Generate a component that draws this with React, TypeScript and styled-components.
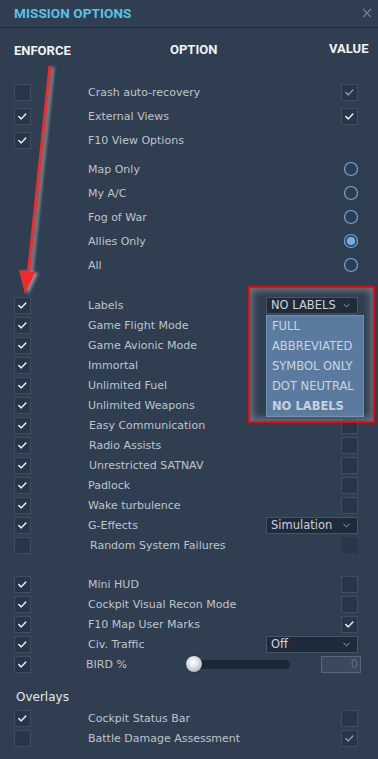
import styled, { createGlobalStyle } from 'styled-components';

const GlobalStyle = createGlobalStyle`
  html, body {
    margin: 0;
    padding: 0;
    background: #2f3e50;
  }
  * {
    box-sizing: border-box;
  }
`;

const Panel = styled.div`
  position: relative;
  width: 378px;
  height: 759px;
  background: #2f3e50;
  font-family: "DejaVu Sans", "Liberation Sans", sans-serif;
  font-size: 11px;
  color: #bfc5cc;
  overflow: hidden;
`;

const TitleBar = styled.div`
  height: 28px;
  display: flex;
  align-items: center;
  justify-content: space-between;
  padding: 0 6px 1px 14px;
  border-bottom: 1px solid #1f2a37;
`;

const Title = styled.div`
  font-family: Roboto, "Liberation Sans", sans-serif;
  font-weight: 700;
  font-size: 13.5px;
  color: #57c2ea;
  letter-spacing: 0.1px;
`;

const Header = styled.div`
  height: 42px;
  display: grid;
  grid-template-columns: 156px 159px auto;
  align-items: center;
  padding-left: 14px;
  font-family: Roboto, "Liberation Sans", sans-serif;
  font-weight: 700;
  font-size: 13px;
  color: #f2f4f6;
`;

const HeadCell = styled.div<{ $dy?: number }>`
  transform: translateY(${p => p.$dy ?? 0}px);
`;

const Section = styled.div<{ $top: number }>`
  margin-top: ${p => p.$top}px;
  display: flex;
  flex-direction: column;
`;

const Row = styled.div<{ $h: number }>`
  height: ${p => p.$h}px;
  display: grid;
  grid-template-columns: 74px 1fr auto;
  align-items: center;
  padding: 0 20px 0 14px;
`;

const OptionText = styled.div<{ $shift?: number }>`
  margin-left: ${p => p.$shift ?? 0}px;
  white-space: nowrap;
`;

const Value = styled.div`
  display: flex;
  align-items: center;
  justify-content: flex-end;
  gap: 31px;
`;

const Box = styled.div<{ $faint?: boolean }>`
  width: 17px;
  height: 17px;
  background: #28364a;
  border: 1px solid ${p => (p.$faint ? '#2c3a4d' : '#3d4e63')};
  display: flex;
  align-items: center;
  justify-content: center;
`;

const Heading = styled.div`
  margin-top: 15px;
  height: 16px;
  display: flex;
  align-items: center;
  padding-left: 16px;
  font-size: 12px;
  color: #e6eaee;
`;

const SelectWrap = styled.div`
  position: relative;
  width: 92px;
  height: 17px;
`;

const SelectBox = styled.div`
  height: 100%;
  display: flex;
  align-items: center;
  justify-content: space-between;
  padding: 0 7px 0 4px;
  background: #1f2b3a;
  border: 1px solid #44556b;
  font-size: 11.5px;
  color: #ced3d9;
`;

const List = styled.div`
  position: absolute;
  top: 18px;
  left: 0;
  width: 98px;
  z-index: 2;
  background: #5a7a9f;
  border: 1px solid #7192b5;
`;

const ListItem = styled.div<{ $active?: boolean }>`
  height: 20px;
  display: flex;
  align-items: center;
  padding-left: 5px;
  font-size: 11.5px;
  font-weight: ${p => (p.$active ? 700 : 400)};
  color: ${p => (p.$active ? '#c9d2dc' : '#cdd5de')};
`;

const Track = styled.div`
  position: relative;
  width: 104px;
  height: 9px;
  border-radius: 5px;
  background: #1c2634;
`;

const Thumb = styled.div`
  position: absolute;
  left: 0;
  top: -3.5px;
  width: 16px;
  height: 16px;
  border-radius: 50%;
  background: radial-gradient(circle at 45% 40%, #ffffff 0%, #e2e6ec 35%, #a8b0ba 80%, #8c96a2 100%);
  box-shadow: 0 0 1px rgba(0, 0, 0, 0.5);
`;

const NumberBox = styled.div`
  width: 40px;
  height: 17px;
  margin-right: -3px;
  background: #3a4a5c;
  border: 1px solid #56677b;
  color: #5d6d80;
  font-size: 11.5px;
  display: flex;
  align-items: center;
  justify-content: flex-end;
  padding-right: 2px;
`;

const Annotation = styled.svg`
  position: absolute;
  left: 0;
  top: 0;
  pointer-events: none;
  z-index: 3;
`;

const RedFrame = styled.div`
  position: absolute;
  left: 248px;
  top: 286px;
  width: 127px;
  height: 137px;
  border: 2.5px solid #ee0a0a;
  box-shadow: inset 0 0 7px 3px rgba(140, 150, 160, 0.6);
  z-index: 3;
  pointer-events: none;
`;

const Check = ({ dim }: { dim?: boolean }) => (
  <svg width="17" height="17" viewBox="0 0 17 17">
    <path d="M4.3 8.6 L7.1 11.2 L12.3 5.6" fill="none" stroke={dim ? '#8e9aa8' : '#f4f6f8'} strokeWidth="1.6" strokeLinecap="round" strokeLinejoin="round" />
  </svg>
);

const CheckBox = ({ on, dim, faint }: { on?: boolean; dim?: boolean; faint?: boolean }) => (
  <Box $faint={faint}>{on && <Check dim={dim} />}</Box>
);

const Radio = ({ on }: { on?: boolean }) => (
  <svg width="16" height="16" viewBox="0 0 16 16" style={{ marginRight: -1 }}>
    <circle cx="8" cy="8" r="6.5" fill="none" stroke="#6ea7df" strokeWidth="1.2" />
    {on && <circle cx="8" cy="8" r="4.3" fill="#72ace6" />}
  </svg>
);

const Chevron = () => (
  <svg width="7" height="5" viewBox="0 0 7 5">
    <path d="M0.5 1 L3.5 3.8 L6.5 1" fill="none" stroke="#9aa6b4" strokeWidth="1" />
  </svg>
);

const Select = ({ value, options }: { value: string; options?: string[] }) => (
  <SelectWrap>
    <SelectBox>
      <span>{value}</span>
      <Chevron />
    </SelectBox>
    {options && (
      <List>
        {options.map(o => (
          <ListItem key={o} $active={o === value}>{o}</ListItem>
        ))}
      </List>
    )}
  </SelectWrap>
);

type Opt = {
  label: string;
  enforce?: boolean | null;
  value?: 'on' | 'dim' | 'off' | 'faint' | 'radio' | 'radioOn' | 'none';
  select?: { value: string; options?: string[] };
  slider?: boolean;
  shift?: number;
};

const first: Opt[] = [
  { label: 'Crash auto-recovery', enforce: false, value: 'dim' },
  { label: 'External Views', enforce: true, value: 'on' },
  { label: 'F10 View Options', enforce: true, value: 'none' },
];

const radios: Opt[] = [
  { label: 'Map Only', enforce: null, value: 'radio' },
  { label: 'My A/C', enforce: null, value: 'radio' },
  { label: 'Fog of War', enforce: null, value: 'radio' },
  { label: 'Allies Only', enforce: null, value: 'radioOn' },
  { label: 'All', enforce: null, value: 'radio' },
];

const labelOptions = ['FULL', 'ABBREVIATED', 'SYMBOL ONLY', 'DOT NEUTRAL', 'NO LABELS'];

const second: Opt[] = [
  { label: 'Labels', enforce: true, select: { value: 'NO LABELS', options: labelOptions } },
  { label: 'Game Flight Mode', enforce: true, value: 'off' },
  { label: 'Game Avionic Mode', enforce: true, value: 'off' },
  { label: 'Immortal', enforce: true, value: 'off' },
  { label: 'Unlimited Fuel', enforce: true, value: 'off' },
  { label: 'Unlimited Weapons', enforce: true, value: 'off' },
  { label: 'Easy Communication', enforce: true, value: 'off', shift: 1 },
  { label: 'Radio Assists', enforce: true, value: 'off', shift: 1 },
  { label: 'Unrestricted SATNAV', enforce: true, value: 'off', shift: 1 },
  { label: 'Padlock', enforce: true, value: 'off' },
  { label: 'Wake turbulence', enforce: true, value: 'off' },
  { label: 'G-Effects', enforce: true, select: { value: 'Simulation' } },
  { label: 'Random System Failures', enforce: false, value: 'faint', shift: 2 },
];

const third: Opt[] = [
  { label: 'Mini HUD', enforce: true, value: 'off' },
  { label: 'Cockpit Visual Recon Mode', enforce: true, value: 'off' },
  { label: 'F10 Map User Marks', enforce: true, value: 'on' },
  { label: 'Civ. Traffic', enforce: true, select: { value: 'Off' } },
  { label: 'BIRD %', enforce: true, slider: true, shift: -2 },
];

const overlays: Opt[] = [
  { label: 'Cockpit Status Bar', enforce: true, value: 'off' },
  { label: 'Battle Damage Assessment', enforce: false, value: 'dim' },
];

const renderValue = (o: Opt) => {
  if (o.select) return <Select value={o.select.value} options={o.select.options} />;
  if (o.slider)
    return (
      <>
        <Track><Thumb /></Track>
        <NumberBox>0</NumberBox>
      </>
    );
  switch (o.value) {
    case 'on': return <CheckBox on />;
    case 'dim': return <CheckBox on dim />;
    case 'off': return <CheckBox />;
    case 'faint': return <CheckBox faint />;
    case 'radio': return <Radio />;
    case 'radioOn': return <Radio on />;
    default: return null;
  }
};

const OptionRow = ({ o, h }: { o: Opt; h: number }) => (
  <Row $h={h}>
    <div>{o.enforce !== null && o.enforce !== undefined && <CheckBox on={o.enforce} />}</div>
    <OptionText $shift={o.shift}>{o.label}</OptionText>
    <Value>{renderValue(o)}</Value>
  </Row>
);

export default function App() {
  return (
    <>
      <GlobalStyle />
      <Panel>
        <TitleBar>
          <Title>MISSION OPTIONS</Title>
          <svg width="10" height="10" viewBox="0 0 10 10">
            <path d="M1 1 L9 9 M9 1 L1 9" stroke="#6b86a0" strokeWidth="1.1" />
          </svg>
        </TitleBar>
        <Header>
          <HeadCell $dy={1}>ENFORCE</HeadCell>
          <HeadCell>OPTION</HeadCell>
          <HeadCell $dy={-1}>VALUE</HeadCell>
        </Header>

        <Section $top={10}>
          {first.map(o => <OptionRow key={o.label} o={o} h={24} />)}
        </Section>
        <Section $top={5}>
          {radios.map(o => <OptionRow key={o.label} o={o} h={24} />)}
        </Section>
        <Section $top={18}>
          {second.map(o => <OptionRow key={o.label} o={o} h={20} />)}
        </Section>
        <Section $top={19}>
          {third.map(o => <OptionRow key={o.label} o={o} h={20} />)}
        </Section>

        <Heading>Overlays</Heading>
        <Section $top={3}>
          {overlays.map(o => <OptionRow key={o.label} o={o} h={20} />)}
        </Section>

        <RedFrame />
        <Annotation width="378" height="759" viewBox="0 0 378 759">
          <defs>
            <filter id="sh" x="-50%" y="-10%" width="200%" height="120%">
              <feGaussianBlur in="SourceAlpha" stdDeviation="1.6" />
              <feOffset dx="3" dy="1" result="b" />
              <feFlood floodColor="#9aa3ad" floodOpacity="0.8" />
              <feComposite in2="b" operator="in" />
              <feMerge>
                <feMergeNode />
                <feMergeNode in="SourceGraphic" />
              </feMerge>
            </filter>
          </defs>
          <g filter="url(#sh)">
            <line x1="50" y1="66" x2="28.5" y2="272" stroke="#f22b2b" strokeWidth="3" />
            <polygon points="19,270 35.5,272 25,294" fill="#f22b2b" />
          </g>
        </Annotation>
      </Panel>
    </>
  );
}
